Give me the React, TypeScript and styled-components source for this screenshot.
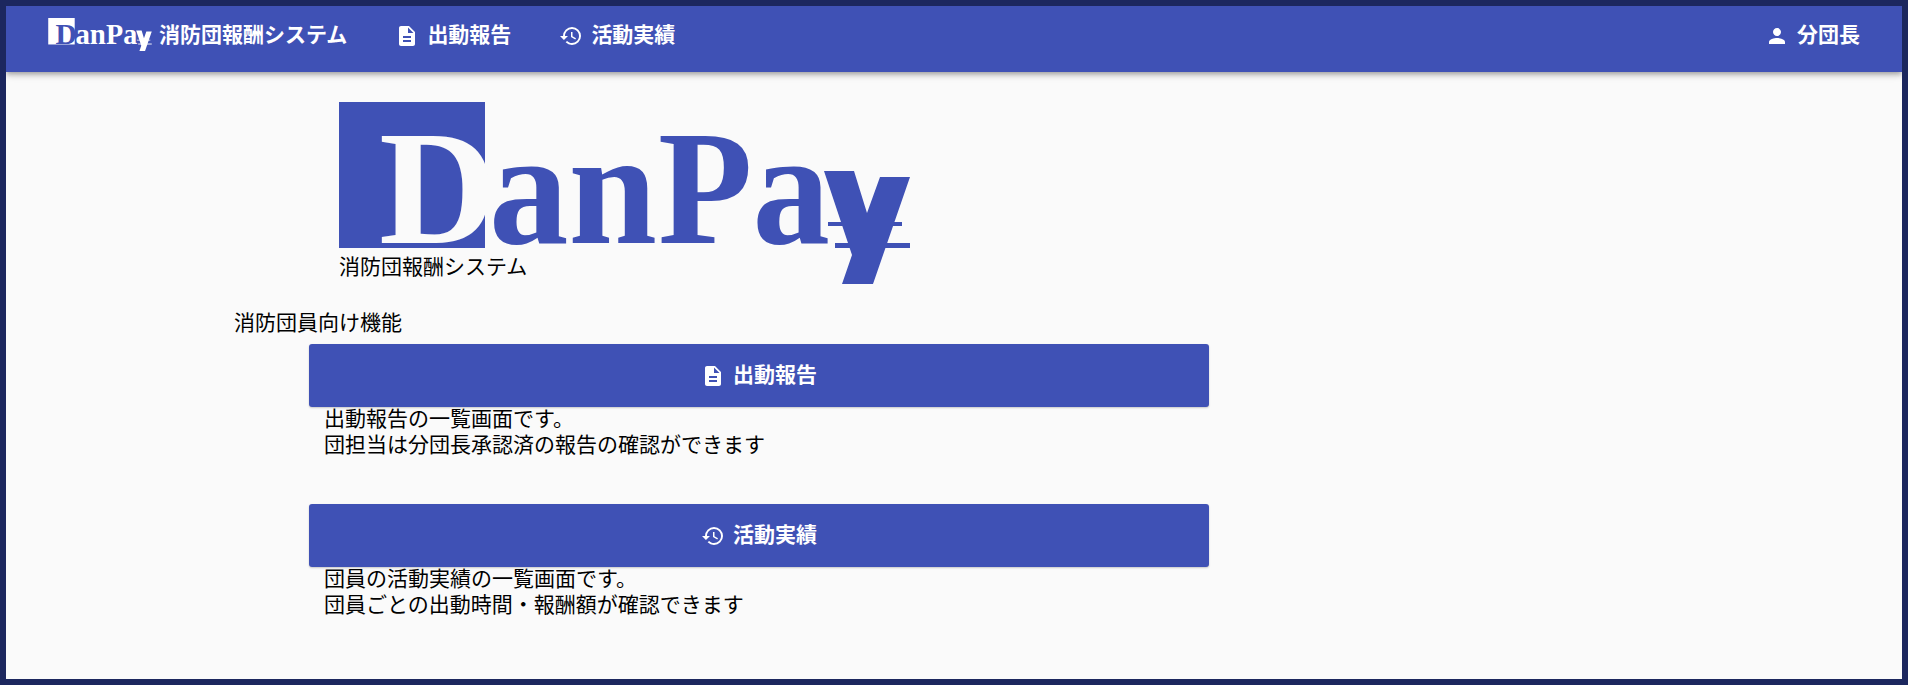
import React from "react";
import styled, { createGlobalStyle } from "styled-components";
import { MdDescription, MdHistory, MdPerson } from "react-icons/md";

const Global = createGlobalStyle`
  html, body { margin: 0; padding: 0; height: 100%; }
  body { font-family: Roboto, "Noto Sans CJK JP", sans-serif; background: #1c275e; color: #000; }
  #root { height: 100%; }
`;

const Frame = styled.div`
  box-sizing: border-box;
  width: 1908px;
  height: 685px;
  border: 6px solid #1c275e;
  background: #fafafa;
  overflow: hidden;
`;

const Header = styled.header`
  box-sizing: border-box;
  height: 66px;
  background: #3f51b5;
  color: #fff;
  display: flex;
  align-items: center;
  padding: 0 42px 7px;
  box-shadow: 0 2px 4px -1px rgba(0,0,0,.2), 0 4px 5px 0 rgba(0,0,0,.14), 0 1px 10px 0 rgba(0,0,0,.12);
  position: relative;
`;

const BrandMark = styled.div`
  width: 104px;
  height: 33px;
  margin-right: 7px;
  align-self: flex-start;
  padding-top: 12px;
`;

const Title = styled.span`
  font-size: 21px;
  font-weight: 700;
  line-height: 1.5;
  margin-right: 48px;
  white-space: nowrap;
`;

const NavItem = styled.a`
  display: inline-flex;
  align-items: center;
  gap: 8px;
  font-size: 21px;
  font-weight: 700;
  line-height: 1.5;
  margin-right: 48px;
  white-space: nowrap;
  svg { width: 24px; height: 24px; }
`;

const Spacer = styled.div`
  flex: 1;
`;

const UserItem = styled(NavItem)`
  margin-right: 0;
`;

const Main = styled.main`
  padding: 0 0 0 228px;
`;

const LogoBlock = styled.div`
  margin-left: 105px;
  padding-top: 30px;
  height: 182px;
  position: relative;
  width: 571px;
`;

const LogoCaption = styled.div`
  position: absolute;
  left: 0;
  top: 180px;
  font-size: 21px;
  line-height: 30px;
  white-space: nowrap;
`;

const SectionLabel = styled.div`
  font-size: 21px;
  line-height: 30px;
  margin: 24px 0 6px;
`;

const Feature = styled.section`
  margin: 0 0 46px 75px;
  width: 900px;
`;

const ActionButton = styled.button`
  display: flex;
  align-items: center;
  justify-content: center;
  gap: 8px;
  width: 100%;
  height: 63px;
  border: 0;
  border-radius: 3px;
  background: #3f51b5;
  color: #fff;
  font-family: inherit;
  font-size: 21px;
  font-weight: 700;
  line-height: 1.5;
  box-shadow: 0 1px 2px rgba(0,0,0,.2);
  svg { width: 24px; height: 24px; }
`;

const Description = styled.div`
  padding-left: 15px;
  font-size: 21px;
  line-height: 25.5px;
`;

const LogoSvg: React.FC<{ bg: string; ink: string; knock: string; width: number; height: number }> = ({ bg, ink, knock, width, height }) => (
  <svg viewBox="0 0 571 182" width={width} height={height} style={{ display: "block", overflow: "visible" }}>
    <rect x="0" y="0" width="146" height="146" fill={bg} />
    <g fontFamily="'Liberation Serif', serif" fontWeight="700" fontSize="164">
      <text x="40" y="141" fill={knock} textLength="118" lengthAdjust="spacingAndGlyphs">D</text>
      <text x="150" y="141" fill={ink} textLength="168" lengthAdjust="spacingAndGlyphs">an</text>
      <text x="319" y="141" fill={ink} textLength="172" lengthAdjust="spacingAndGlyphs">Pa</text>
    </g>
    <g fill={ink}>
      <polygon points="485,69 515,69 528,111 541,75 571,75 534,182 503,182 513,153" />
      <rect x="489" y="120" width="74" height="4" />
      <rect x="496" y="141" width="75" height="5" />
    </g>
  </svg>
);

export default function App() {
  return (
    <Frame>
      <Global />
      <Header>
        <BrandMark>
          <LogoSvg bg="#ffffff" ink="#ffffff" knock="#3f51b5" width={104} height={33} />
        </BrandMark>
        <Title>消防団報酬システム</Title>
        <NavItem><MdDescription />出動報告</NavItem>
        <NavItem><MdHistory />活動実績</NavItem>
        <Spacer />
        <UserItem><MdPerson />分団長</UserItem>
      </Header>
      <Main>
        <LogoBlock>
          <LogoSvg bg="#3f51b5" ink="#3f51b5" knock="#fafafa" width={571} height={182} />
          <LogoCaption>消防団報酬システム</LogoCaption>
        </LogoBlock>
        <SectionLabel>消防団員向け機能</SectionLabel>
        <Feature>
          <ActionButton><MdDescription />出動報告</ActionButton>
          <Description>出動報告の一覧画面です。<br />団担当は分団長承認済の報告の確認ができます</Description>
        </Feature>
        <Feature>
          <ActionButton><MdHistory />活動実績</ActionButton>
          <Description>団員の活動実績の一覧画面です。<br />団員ごとの出動時間・報酬額が確認できます</Description>
        </Feature>
      </Main>
    </Frame>
  );
}
